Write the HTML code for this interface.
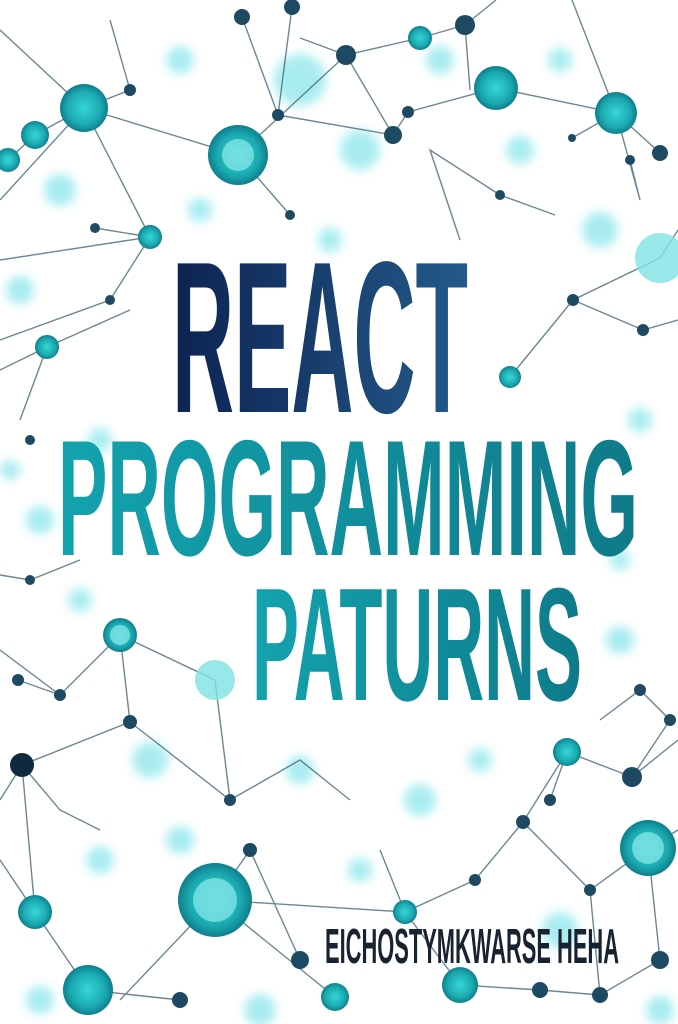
<!DOCTYPE html>
<html><head><meta charset="utf-8"><style>
html,body{margin:0;padding:0;background:#fff;}
svg{display:block}
</style></head><body>
<svg width="678" height="1024" viewBox="0 0 678 1024" xmlns="http://www.w3.org/2000/svg">
<defs>
<filter id="b4"><feGaussianBlur stdDeviation="5"/></filter>
<radialGradient id="g" cx="50%" cy="50%" r="50%"><stop offset="0" stop-color="#37d7d6"/><stop offset=".7" stop-color="#1aa9b0"/><stop offset="1" stop-color="#0e7f8c"/></radialGradient>
<linearGradient id="rg" x1="0" x2="1"><stop offset="0" stop-color="#0d2352"/><stop offset="1" stop-color="#235a8a"/></linearGradient>
<linearGradient id="pg" x1="0" x2="1"><stop offset="0" stop-color="#13a3ae"/><stop offset="1" stop-color="#0f7a8a"/></linearGradient>
</defs>
<rect width="678" height="1024" fill="#fff"/>
<g filter="url(#b4)" fill="#6fe0e6" opacity=".6">
<circle cx="300" cy="80" r="26"/><circle cx="360" cy="150" r="20"/><circle cx="180" cy="60" r="14"/><circle cx="60" cy="190" r="16"/><circle cx="520" cy="150" r="14"/><circle cx="600" cy="230" r="18"/><circle cx="20" cy="290" r="14"/><circle cx="100" cy="440" r="12"/><circle cx="40" cy="520" r="14"/><circle cx="150" cy="760" r="18"/><circle cx="300" cy="770" r="14"/><circle cx="420" cy="800" r="16"/><circle cx="620" cy="640" r="14"/><circle cx="560" cy="930" r="18"/><circle cx="260" cy="1010" r="16"/><circle cx="660" cy="1010" r="14"/><circle cx="100" cy="860" r="14"/><circle cx="40" cy="1000" r="14"/>
<circle cx="440" cy="60" r="14"/><circle cx="330" cy="240" r="12"/><circle cx="200" cy="210" r="12"/><circle cx="560" cy="60" r="12"/><circle cx="640" cy="420" r="12"/><circle cx="80" cy="600" r="12"/><circle cx="180" cy="840" r="14"/><circle cx="480" cy="760" r="12"/><circle cx="360" cy="870" r="12"/><circle cx="620" cy="560" r="10"/><circle cx="10" cy="470" r="10"/>
</g>
<g stroke="#3b5f70" stroke-width="1.4" opacity=".75" fill="none">
<path d="M0 30 L84 108 L150 237 L95 228 M84 108 L238 155 L290 215 M84 108 L35 135 L8 160 M0 260 L150 237 M84 108 L0 200 M130 90 L110 20 M130 90 L84 108 M238 155 L346 55 L300 38 M346 55 L420 38 L465 25 L496 0 M346 55 L393 135 L408 112 L496 88 L616 113 L660 153 M393 135 L278 115 L292 7 M242 17 L278 115 M465 25 L470 90 M616 113 L572 138 M616 113 L572 0 M616 113 L640 200 L630 160 M660 258 L573 300 L510 377 M573 300 L643 330 L678 320 M660 258 L678 230 M47 347 L0 370 M47 347 L130 310 M47 347 L20 420 M500 195 L430 150 L460 240 M500 195 L555 215 M150 237 L110 300 L0 340"/>
<path d="M215 900 L120 1000 M215 900 L250 850 L300 960 M215 900 L335 997 M215 900 L405 912 L475 880 L523 822 L567 752 L632 777 L678 740 M567 752 L550 800 M523 822 L590 890 L648 848 M648 848 L678 830 M405 912 L460 985 L540 990 L600 995 L660 960 M648 848 L660 960 M120 635 L60 695 L18 680 M120 635 L215 680 L230 800 M120 635 L130 722 L22 765 L0 800 M22 765 L35 912 L88 990 M35 912 L0 860 M88 990 L180 1000 M130 722 L230 800 L300 760 L350 800 M640 690 L670 720 L632 777 M590 890 L600 995 M0 650 L60 695 M0 575 L30 580 L80 560 M22 765 L60 810 L100 830 M405 912 L380 850 M600 720 L640 690"/>
</g>
<g fill="url(#g)">
<circle cx="84" cy="108" r="24"/><circle cx="238" cy="155" r="30"/><circle cx="35" cy="135" r="14"/><circle cx="496" cy="88" r="22"/><circle cx="616" cy="113" r="21"/><circle cx="150" cy="237" r="12"/><circle cx="8" cy="160" r="12"/><circle cx="47" cy="347" r="12"/><circle cx="510" cy="377" r="11"/><circle cx="120" cy="635" r="17"/><circle cx="215" cy="900" r="37"/><circle cx="35" cy="912" r="17"/><circle cx="88" cy="990" r="25"/><circle cx="648" cy="848" r="28"/><circle cx="460" cy="985" r="18"/><circle cx="335" cy="997" r="14"/><circle cx="567" cy="752" r="14"/><circle cx="405" cy="912" r="12"/><circle cx="420" cy="38" r="12"/>
</g>
<g fill="#7fe3e6" opacity=".8"><circle cx="660" cy="258" r="25"/><circle cx="215" cy="680" r="20"/><circle cx="120" cy="635" r="10"/><circle cx="238" cy="155" r="16"/><circle cx="215" cy="900" r="22"/><circle cx="648" cy="848" r="16"/></g>
<g fill="#1d4a62">
<circle cx="465" cy="25" r="10"/><circle cx="346" cy="55" r="10"/><circle cx="393" cy="135" r="9"/><circle cx="408" cy="112" r="6"/><circle cx="278" cy="115" r="6"/><circle cx="292" cy="7" r="8"/><circle cx="242" cy="17" r="8"/><circle cx="130" cy="90" r="6"/><circle cx="95" cy="228" r="5"/><circle cx="500" cy="195" r="5"/><circle cx="630" cy="160" r="5"/><circle cx="660" cy="153" r="8"/><circle cx="572" cy="138" r="4"/><circle cx="290" cy="215" r="5"/><circle cx="573" cy="300" r="6"/><circle cx="643" cy="330" r="6"/><circle cx="22" cy="765" r="12" fill="#0f2a3e"/><circle cx="130" cy="722" r="7"/><circle cx="60" cy="695" r="6"/><circle cx="18" cy="680" r="6"/><circle cx="550" cy="800" r="6"/><circle cx="590" cy="890" r="6"/><circle cx="475" cy="880" r="6"/><circle cx="523" cy="822" r="7"/><circle cx="660" cy="960" r="9"/><circle cx="640" cy="690" r="6"/><circle cx="670" cy="720" r="6"/><circle cx="30" cy="580" r="5"/><circle cx="230" cy="800" r="6"/><circle cx="250" cy="850" r="7"/><circle cx="300" cy="960" r="9"/><circle cx="180" cy="1000" r="8"/><circle cx="540" cy="990" r="8"/><circle cx="600" cy="995" r="8"/><circle cx="632" cy="777" r="10"/><circle cx="30" cy="440" r="5"/><circle cx="110" cy="300" r="5"/>
</g>
<g font-family="Liberation Sans, sans-serif" font-weight="bold">
<text x="172" y="412" font-size="216" textLength="296" lengthAdjust="spacingAndGlyphs" fill="url(#rg)">REACT</text>
<text x="58" y="555" font-size="165" textLength="580" lengthAdjust="spacingAndGlyphs" fill="url(#pg)">PROGRAMMING</text>
<text x="252" y="700" font-size="161" textLength="330" lengthAdjust="spacingAndGlyphs" fill="url(#pg)">PATURNS</text>
<text x="325" y="963" font-size="49" textLength="294" lengthAdjust="spacingAndGlyphs" fill="#172330">EICHOSTYMKWARSE HEHA</text>
</g>
</svg>
</body></html>
